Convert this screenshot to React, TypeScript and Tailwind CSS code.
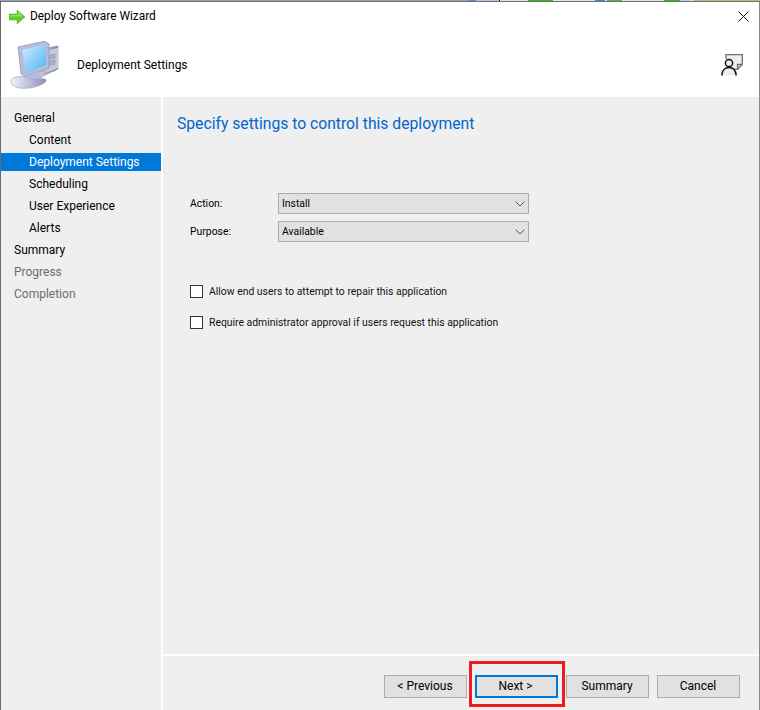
const font = { fontFamily: 'Roboto, "Noto Sans", sans-serif' };

function Computer() {
  return (
    <svg width="50" height="50" viewBox="0 0 50 50" className="shrink-0">
      <defs>
        <linearGradient id="scr" x1="0" y1="0" x2="1" y2="1">
          <stop offset="0" stopColor="#cfeeff" />
          <stop offset="1" stopColor="#4fb4f4" />
        </linearGradient>
        <linearGradient id="tower" x1="0" y1="0" x2="1" y2="0">
          <stop offset="0" stopColor="#d5d9e6" />
          <stop offset="1" stopColor="#7f86ad" />
        </linearGradient>
        <linearGradient id="base" x1="0" y1="0" x2="1" y2="0">
          <stop offset="0" stopColor="#f0f1f8" />
          <stop offset="1" stopColor="#8d8fc0" />
        </linearGradient>
      </defs>
      <path d="M27 9 L49 5 L49 28 L32 36 L27 31 Z" fill="url(#tower)" stroke="#7b80a5" strokeWidth=".5" />
      <path d="M32 11 L49 7 L49 27 L38 31 L32 28 Z" fill="#c4c9dc" />
      <path d="M37 15 L46 13 L46 17 L37 19 Z M37 21 L46 19 L46 23 L37 25 Z" fill="#a9aecb" stroke="#8b90b4" strokeWidth=".5" />
      <circle cx="45" cy="30" r=".9" fill="#6fd13f" />
      <path d="M9 6 L36 0 L40 3 L40 27 L17 36 L12 33 Z" fill="#b8bcd8" stroke="#8085b0" strokeWidth=".6" />
      <path d="M13 9 L37 3 L37 24 L17 32 Z" fill="url(#scr)" />
      <path d="M20 35 L30 31 L33 37 L22 41 Z" fill="#b9bbd9" />
      <path d="M2 40 C3 35 12 35 20 36 C22 40 30 37 36 38 C40 40 33 45 21 47 C12 48 2 47 2 40 Z" fill="url(#base)" stroke="#8c8fb8" strokeWidth=".5" />
    </svg>
  );
}

function Arrow() {
  return (
    <svg width="17" height="14" viewBox="0 0 17 14" className="shrink-0">
      <path d="M0 4 H8 V0 L16 7 L8 14 V10 H0 Z" fill="#62c92f" stroke="#4fae22" strokeWidth=".5" />
      <path d="M1 5 H9 V2 L14 6.5 H1 Z" fill="#93e35d" />
    </svg>
  );
}

function UserNote() {
  return (
    <svg width="23" height="22" viewBox="0 0 23 22" fill="none" className="shrink-0">
      <path d="M5 5 V.7 H21.3 V10.5 L16.5 15.3 H13" stroke="#6f6f6f" strokeWidth="1.3" fill="#eeeeee" />
      <path d="M16.5 15.3 V10.5 H21.3" stroke="#6f6f6f" strokeWidth="1.3" />
      <circle cx="8" cy="9" r="3.6" stroke="#111" strokeWidth="1.5" fill="#f4f4f4" />
      <path d="M.8 21.5 C1 16.5 4 13.5 8 13.5 C12 13.5 14.8 16.5 15.2 21.5" stroke="#111" strokeWidth="1.5" fill="#eeeeee" />
    </svg>
  );
}

function Chevron() {
  return (
    <svg width="10" height="6" viewBox="0 0 10 6" fill="none" className="shrink-0">
      <path d="M.5 .5 L5 5 L9.5 .5" stroke="#555" strokeWidth="1" />
    </svg>
  );
}

function Select({ value }: { value: string }) {
  return (
    <div className="flex h-[21px] w-[251px] items-center justify-between border border-[#adadad] bg-[#e1e1e1] pl-[3px] pr-[3px] text-[10.4px] text-black">
      <span>{value}</span>
      <Chevron />
    </div>
  );
}

function Check({ label }: { label: string }) {
  return (
    <div className="flex items-center gap-[6px] text-[10.4px] text-[#111]">
      <div className="h-[13px] w-[13px] border border-[#333] bg-white" />
      <span>{label}</span>
    </div>
  );
}

function Btn({ label, focus }: { label: string; focus?: boolean }) {
  return (
    <div
      className={
        focus
          ? "flex h-[23px] w-[83px] items-center justify-center border-2 border-[#0078d7] bg-[#e1e1e1] pb-[1px] pr-[2px] text-[12px] text-black"
          : "flex h-[23px] w-[83px] items-center justify-center border border-[#adadad] bg-[#e1e1e1] pb-[1px] pr-[1px] text-[12px] text-black"
      }
    >
      {label}
    </div>
  );
}

const nav: [string, string][] = [
  ["General", "pl-[13px] text-black"],
  ["Content", "pl-[28px] text-black"],
  ["Deployment Settings", "pl-[28px] bg-[#0078d7] text-white"],
  ["Scheduling", "pl-[28px] text-black"],
  ["User Experience", "pl-[28px] text-black"],
  ["Alerts", "pl-[28px] text-black"],
  ["Summary", "pl-[13px] text-black"],
  ["Progress", "pl-[13px] text-[#6d6d6d]"],
  ["Completion", "pl-[13px] text-[#6d6d6d]"],
];

const strip: [string, string][] = [
  ["w-[469px]", "bg-[#9aa0a8]"],
  ["w-[7px]", "bg-[#5b8fd8]"],
  ["w-[23px]", "bg-[#b9c4ea]"],
  ["w-[1px]", "bg-black"],
  ["w-[28px]", "bg-[#e4e4e4]"],
  ["w-[25px]", "bg-[#38b81e]"],
  ["w-[42px]", "bg-[#e4e4e4]"],
  ["w-[10px]", "bg-[#4d86c6]"],
  ["w-[2px]", "bg-[#e4e4e4]"],
  ["w-[15px]", "bg-[#45c02a]"],
  ["w-[42px]", "bg-[#e4e4e4]"],
  ["w-[16px]", "bg-[#38b81e]"],
  ["w-[10px]", "bg-[#c6c8e4]"],
  ["w-[4px]", "bg-[#e4e4e4]"],
  ["w-[66px]", "bg-[#c9b27a]"],
];

export default function App() {
  return (
    <div style={font} className="flex h-[710px] w-[760px] flex-col overflow-hidden bg-white">
      <div className="flex h-[1px] shrink-0">
        {strip.map(([w, c], i) => (
          <div key={i} className={"h-full " + w + " " + c} />
        ))}
      </div>
      <div className="flex min-h-0 flex-1 flex-col border-t border-l border-r border-t-[#707070] border-l-[#6b6b6b] border-r-[#8a8a8a] bg-white">
        <div className="flex h-[29px] shrink-0 items-center pl-[8px] pr-[6px]">
          <Arrow />
          <span className="ml-[4px] text-[11.9px] text-black">Deploy Software Wizard</span>
          <svg width="11" height="11" viewBox="0 0 11 11" className="ml-auto mr-[4px]">
            <path d="M.5 .5 L10.5 10.5 M10.5 .5 L.5 10.5" stroke="#111" strokeWidth="1" />
          </svg>
        </div>
        <div className="flex h-[66px] shrink-0 items-center pl-[8px] pr-[15px]">
          <div className="mt-[4px]">
            <Computer />
          </div>
          <span className="ml-[18px] mt-[2px] text-[12px] text-black">Deployment Settings</span>
          <div className="ml-auto mt-[1px]">
            <UserNote />
          </div>
        </div>
        <div className="flex min-h-0 flex-1 gap-[2px]">
          <div className="flex w-[160px] shrink-0 flex-col gap-[4px] bg-[#efefef] pt-[12px]">
            {nav.map(([t, c]) => (
              <div key={t} className={"flex h-[18px] items-center text-[12px] " + c}>
                {t}
              </div>
            ))}
          </div>
          <div className="flex min-w-0 flex-1 flex-col gap-[2px]">
            <div className="flex min-h-0 flex-1 flex-col bg-[#efefef] pl-[14px] pt-[15px]">
              <div className="text-[15.7px] leading-[24px] text-[#0066cc]">Specify settings to control this deployment</div>
              <div className="mt-[57px] flex flex-col gap-[7px] pl-[13px]">
                <div className="flex items-center">
                  <span className="w-[88px] text-[10.4px] text-black">Action:</span>
                  <Select value="Install" />
                </div>
                <div className="flex items-center">
                  <span className="w-[88px] text-[10.4px] text-black">Purpose:</span>
                  <Select value="Available" />
                </div>
              </div>
              <div className="mt-[42px] flex flex-col gap-[15px] pl-[13px]">
                <Check label="Allow end users to attempt to repair this application" />
                <Check label="Require administrator approval if users request this application" />
              </div>
            </div>
            <div className="relative flex h-[54px] shrink-0 items-start justify-end gap-[8px] bg-[#efefef] pr-[19px] pt-[19px]">
              <Btn label="< Previous" />
              <Btn label="Next >" focus />
              <Btn label="Summary" />
              <Btn label="Cancel" />
              <div className="absolute left-[306px] top-[5px] h-[46px] w-[96px] border-[3px] border-[#ed1c24]" />
            </div>
          </div>
        </div>
      </div>
    </div>
  );
}
